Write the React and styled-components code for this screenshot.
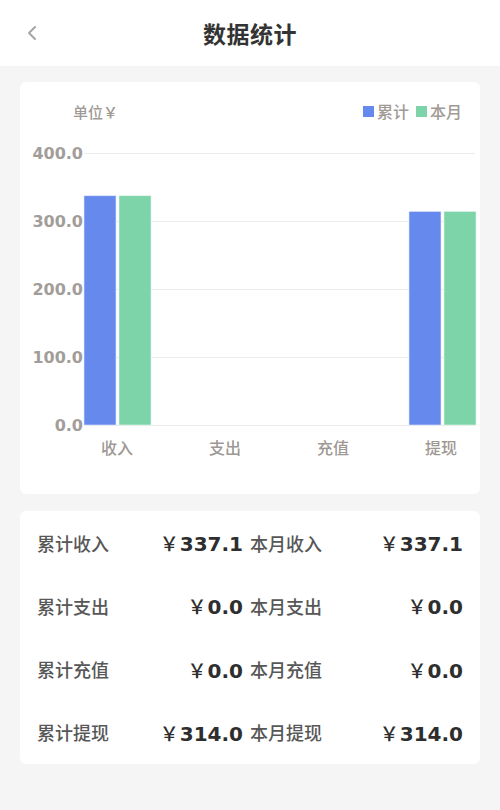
import styled, { createGlobalStyle } from 'styled-components';

const GlobalStyle = createGlobalStyle`
  html, body {
    margin: 0;
    padding: 0;
    background: #f5f5f5;
    font-family: Inter, "Noto Sans CJK SC", sans-serif;
  }
`;

const chartData = [
  { name: '收入', total: 337.1, month: 337.1 },
  { name: '支出', total: 0, month: 0 },
  { name: '充值', total: 0, month: 0 },
  { name: '提现', total: 314.0, month: 314.0 },
];

const stats = [
  ['累计收入', '337.1', '本月收入', '337.1'],
  ['累计支出', '0.0', '本月支出', '0.0'],
  ['累计充值', '0.0', '本月充值', '0.0'],
  ['累计提现', '314.0', '本月提现', '314.0'],
];

const BLUE = '#6689ee';
const GREEN = '#7dd4a8';

// chart geometry (px)
const BASE = 285;
const STEP = 68; // per 100
const ticks = [400, 300, 200, 100, 0];

const App = () => {
  return (
    <>
      <GlobalStyle />
      <Page>
        <Header>
          <Back>
            <svg width="12" height="16" viewBox="0 0 12 16">
              <path d="M9 2 L3 8 L9 14" fill="none" stroke="#a6a6a6" strokeWidth="2" strokeLinecap="round" strokeLinejoin="round" />
            </svg>
          </Back>
          <Title>数据统计</Title>
        </Header>

        <ChartCard>
          <CardHead>
            <Unit>单位￥</Unit>
            <Legend>
              <LegendItem>
                <Swatch $color={BLUE} />
                累计
              </LegendItem>
              <LegendItem>
                <Swatch $color={GREEN} />
                本月
              </LegendItem>
            </Legend>
          </CardHead>
          <svg width="460" height="354" viewBox="0 0 460 354" style={{ display: 'block' }}>
            {ticks.map((t, i) => (
              <g key={t}>
                <line x1="64" x2="455" y1={13 + i * STEP + 0.5} y2={13 + i * STEP + 0.5} stroke="#ececec" strokeWidth="1" />
                <text
                  x="63"
                  y={13 + i * STEP}
                  textAnchor="end"
                  dominantBaseline="central"
                  fill="#a29d99"
                  fontSize="16"
                  fontWeight="700"
                  fontFamily='"DejaVu Sans", sans-serif'
                >
                  {t.toFixed(1)}
                </text>
              </g>
            ))}
            {chartData.map((d, i) => {
              const cx = 97 + i * 108;
              const bx = i === 3 ? 389 : 64 + i * 108;
              const hT = (d.total / 100) * STEP;
              const hM = (d.month / 100) * STEP;
              return (
                <g key={d.name}>
                  {hT > 0 && <rect x={bx} y={BASE - hT} width="32" height={hT} fill={BLUE} stroke="#dfe6fb" strokeWidth="0.6" />}
                  {hM > 0 && <rect x={bx + 35} y={BASE - hM} width="32" height={hM} fill={GREEN} stroke="#dff4e9" strokeWidth="0.6" />}
                  <text
                    x={cx}
                    y="307"
                    textAnchor="middle"
                    dominantBaseline="central"
                    fill="#9e9894"
                    fontSize="16"
                    fontWeight="500"
                    fontFamily='"Noto Sans CJK SC", sans-serif'
                  >
                    {d.name}
                  </text>
                </g>
              );
            })}
          </svg>
        </ChartCard>

        <StatsCard>
          {stats.map(([l1, v1, l2, v2]) => (
            <StatRow key={l1}>
              <StatCell>
                <Label>{l1}</Label>
                <Value>
                  <Yen>￥</Yen>
                  {v1}
                </Value>
              </StatCell>
              <StatCell>
                <Label>{l2}</Label>
                <Value>
                  <Yen>￥</Yen>
                  {v2}
                </Value>
              </StatCell>
            </StatRow>
          ))}
        </StatsCard>
      </Page>
    </>
  );
};

const Page = styled.div`
  width: 500px;
  min-height: 810px;
  background: #f5f5f5;
  padding-bottom: 40px;
`;

const Header = styled.header`
  position: relative;
  height: 66px;
  background: #fff;
  display: flex;
  align-items: center;
  justify-content: center;
`;

const Back = styled.div`
  position: absolute;
  left: 26px;
  top: 25px;
  width: 12px;
  height: 16px;
`;

const Title = styled.h1`
  margin: 0;
  font-family: "Noto Sans CJK SC", sans-serif;
  font-size: 23px;
  font-weight: 700;
  color: #333;
  letter-spacing: 0.5px;
`;

const Card = styled.section`
  width: 460px;
  margin: 0 20px;
  background: #fff;
  border-radius: 6px;
`;

const ChartCard = styled(Card)`
  margin-top: 16px;
  height: 412px;
`;

const CardHead = styled.div`
  height: 58px;
  display: flex;
  align-items: center;
  justify-content: space-between;
  padding: 0 18px 0 53px;
  box-sizing: border-box;
  font-family: "Noto Sans CJK SC", sans-serif;
  font-size: 15px;
  font-weight: 500;
  color: #a09a95;
`;

const Unit = styled.span``;

const Legend = styled.div`
  display: flex;
  gap: 7px;
`;

const LegendItem = styled.span`
  display: flex;
  align-items: center;
  gap: 3px;
  font-size: 16px;
`;

const Swatch = styled.i`
  width: 11px;
  height: 11px;
  background: ${(p) => p.$color};
`;

const StatsCard = styled(Card)`
  margin-top: 17px;
  padding: 0 17px;
  box-sizing: border-box;
  height: 253px;
  display: flex;
  flex-direction: column;
`;

const StatRow = styled.div`
  flex: 1;
  display: grid;
  grid-template-columns: 206px 213px;
  column-gap: 7px;
  align-items: center;
`;

const StatCell = styled.div`
  display: flex;
  align-items: center;
  justify-content: space-between;
`;

const Label = styled.span`
  font-family: "Noto Sans CJK SC", sans-serif;
  font-size: 18px;
  font-weight: 500;
  color: #575757;
`;

const Value = styled.span`
  font-family: "DejaVu Sans", sans-serif;
  font-size: 20px;
  font-weight: 700;
  color: #2e2e2e;
  display: flex;
  align-items: baseline;
`;

const Yen = styled.span`
  font-family: "Noto Sans CJK SC", sans-serif;
  font-weight: 500;
  font-size: 19px;
  margin-right: 1px;
`;

export default App;
